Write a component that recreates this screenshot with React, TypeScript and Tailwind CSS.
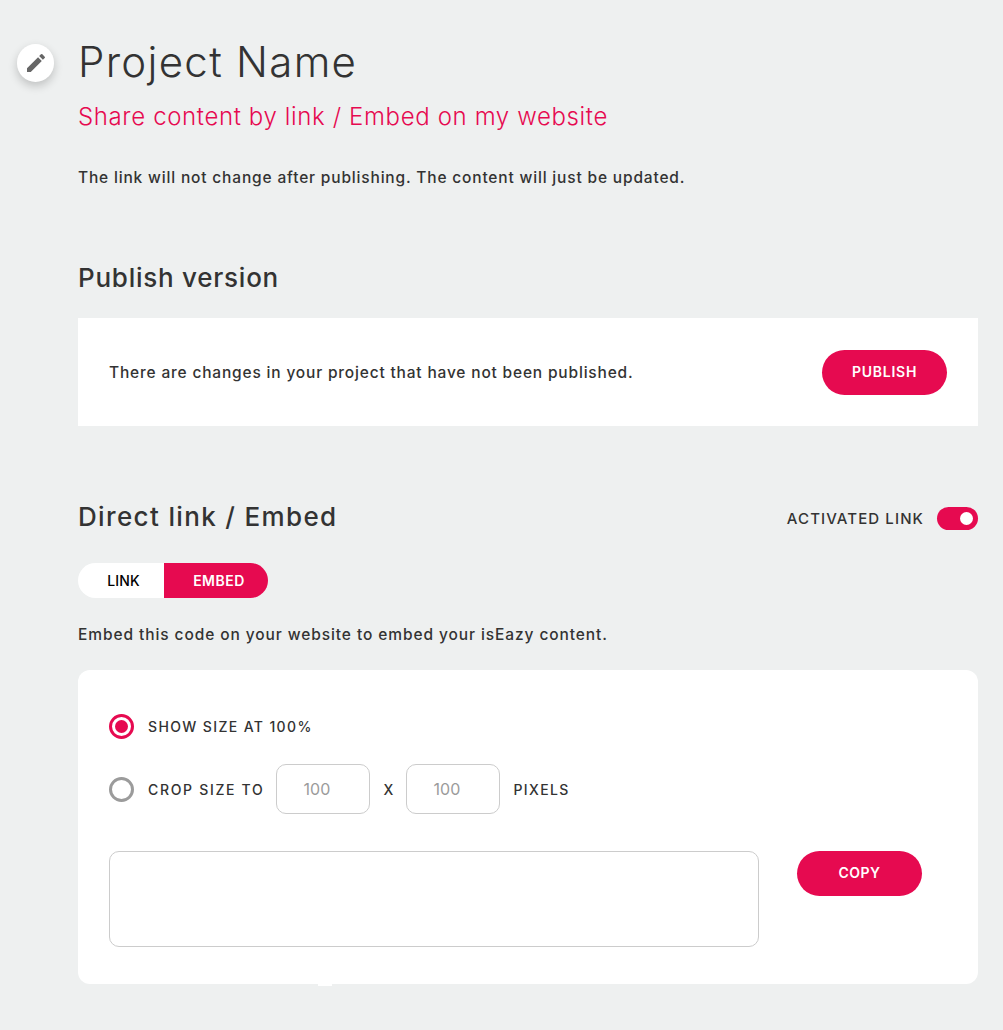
function Radio({ checked }: { checked?: boolean }) {
  return checked ? (
    <span className="flex h-[25px] w-[25px] items-center justify-center rounded-full border-[3px] border-[#e60a50]">
      <span className="h-[13px] w-[13px] rounded-full bg-[#e60a50]" />
    </span>
  ) : (
    <span className="h-[25px] w-[25px] rounded-full border-[3px] border-[#9b9b9b]" />
  )
}

function SizeInput() {
  return (
    <div className="flex h-[50px] w-[94px] items-center justify-center rounded-[10px] border border-[#cccccc] bg-white pr-[13px] text-[16px] text-[#9b9b9b]">
      100
    </div>
  )
}

export default function App() {
  return (
    <div className="relative flex h-[1030px] w-[1003px] overflow-hidden bg-[#eef0f0] font-['Inter',sans-serif] text-[#333333]">
      {/* Edit name button */}
      <button className="absolute left-[17px] top-[44px] flex h-[38px] w-[37px] items-center justify-center rounded-full bg-white shadow-[0_4px_10px_rgba(0,0,0,0.2)]">
        <svg viewBox="0 0 24 24" className="h-[24px] w-[24px]" fill="#666666">
          <path d="M3 17.25V21h3.75L17.81 9.94l-3.75-3.75L3 17.25zM20.71 7.04a1 1 0 0 0 0-1.41l-2.34-2.34a1 1 0 0 0-1.41 0l-1.83 1.83 3.75 3.75 1.83-1.83z" />
        </svg>
      </button>

      <div className="ml-[78px] flex w-[900px] flex-col">
        <h1 className="mt-[36px] h-[52px] text-[42px] font-light leading-[52px] tracking-[1.3px]">Project Name</h1>
        <h2 className="mt-[14px] h-[30px] text-[24px] font-light leading-[30px] tracking-[0.63px] text-[#e60a50]">
          Share content by link / Embed on my website
        </h2>
        <p className="mt-[36px] h-[20px] text-[15.5px] font-medium leading-[20px] tracking-[0.83px]">
          The link will not change after publishing. The content will just be updated.
        </p>

        <h3 className="mt-[74px] h-[32px] text-[26px] font-medium leading-[32px] tracking-[0.75px]">Publish version</h3>

        <section className="mt-[24px] flex h-[108px] items-center justify-between bg-white pl-[31px] pr-[31px]">
          <span className="pt-[2px] text-[15.5px] font-medium tracking-[0.82px]">
            There are changes in your project that have not been published.
          </span>
          <button className="h-[45px] w-[125px] rounded-full bg-[#e60a50] text-[14px] font-semibold tracking-[0.75px] text-white">
            <span className="relative -top-px">PUBLISH</span>
          </button>
        </section>

        <div className="mt-[74px] flex h-[32px] items-center justify-between">
          <h3 className="text-[26px] font-medium tracking-[1.35px]">Direct link / Embed</h3>
          <div className="flex items-center gap-[13px] pt-[4px]">
            <span className="pt-[2px] text-[15px] font-medium tracking-[1.1px]">ACTIVATED LINK</span>
            <span className="flex h-[23px] w-[41px] items-center justify-end rounded-full bg-[#e60a50] pr-[5px]">
              <span className="h-[13px] w-[13px] rounded-full bg-white" />
            </span>
          </div>
        </div>

        <div className="mt-[31px] flex h-[35px] w-[190px] overflow-hidden rounded-full text-[14px] font-medium">
          <span className="flex w-[86px] items-center justify-center bg-white pl-[5px] tracking-[0.1px] text-black">LINK</span>
          <span className="flex w-[104px] items-center justify-center bg-[#e60a50] pl-[6px] font-semibold tracking-[0.5px] text-white">EMBED</span>
        </div>

        <p className="mt-[27px] h-[20px] text-[15.5px] font-medium leading-[20px] tracking-[0.91px]">
          Embed this code on your website to embed your isEazy content.
        </p>

        <section className="relative mt-[25px] h-[314px] rounded-[12px] bg-white pl-[31px] pt-[44px]">
          <div className="flex items-center gap-[14px]">
            <Radio checked />
            <span className="text-[14px] font-medium tracking-[1.38px]">SHOW SIZE AT 100%</span>
          </div>
          <div className="mt-[25px] flex items-center">
            <Radio />
            <span className="ml-[14px] mr-[12px] text-[14px] font-medium tracking-[1.68px]">CROP SIZE TO</span>
            <SizeInput />
            <span className="mx-[13px] w-[10px] text-center text-[14px] font-medium">X</span>
            <SizeInput />
            <span className="ml-[13px] text-[14px] font-medium tracking-[1.4px]">PIXELS</span>
          </div>
          <div className="mt-[37px] flex items-start gap-[38px]">
            <div className="h-[96px] w-[650px] rounded-[10px] border border-[#cccccc] bg-white" />
            <button className="h-[45px] w-[125px] rounded-full bg-[#e60a50] text-[14px] font-semibold tracking-[0.5px] text-white">
              <span className="relative -top-px">COPY</span>
            </button>
          </div>
          <span className="absolute left-[240px] top-full h-[2px] w-[14px] bg-white" />
        </section>
      </div>
    </div>
  )
}
